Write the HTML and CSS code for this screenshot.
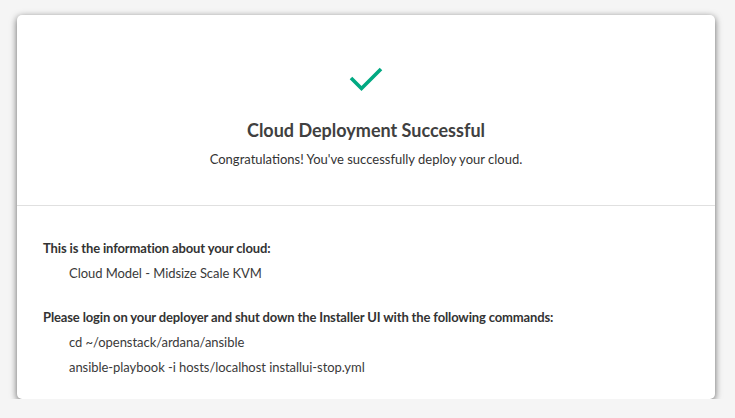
FILE: index.html
```html
<!DOCTYPE html>
<html>
<head>
<meta charset="utf-8">
<link rel="stylesheet" href="styles.css">
</head>
<body>
<div class="card">
  <div class="top">
    <svg class="check" width="36" height="28" viewBox="0 0 36 28">
      <polyline points="3,13 13.5,23.5 33,4" fill="none" stroke="#01a982" stroke-width="3.6"/>
    </svg>
    <h1 class="title">Cloud Deployment Successful</h1>
    <p class="sub">Congratulations! You've successfully deploy your cloud.</p>
  </div>
  <div class="info">
    <div class="label">This is the information about your cloud:</div>
    <div class="item">Cloud Model - Midsize Scale KVM</div>
    <div class="label gap">Please login on your deployer and shut down the Installer UI with the following commands:</div>
    <div class="item">cd ~/openstack/ardana/ansible</div>
    <div class="item">ansible-playbook -i hosts/localhost installui-stop.yml</div>
  </div>
</div>
</body>
</html>
```
FILE: styles.css
```css
html, body { margin: 0; padding: 0; }
body {
  background: #f5f5f5;
  font-family: Lato, "Open Sans", sans-serif;
  color: #333;
  padding: 15px 20px 0 17px;
}
.card {
  width: 698px;
  height: 384px;
  background: #fff;
  border-radius: 5px;
  box-shadow: 0 2px 7px rgba(0,0,0,0.6);
  box-sizing: border-box;
}
.top {
  height: 191px;
  border-bottom: 1px solid #e0e0e0;
  display: flex;
  flex-direction: column;
  align-items: center;
  box-sizing: border-box;
  padding-top: 50px;
}
.check { display: block; }
.title {
  margin: 27px 0 0;
  font-size: 18px;
  font-weight: 700;
  line-height: 20px;
  color: #404040;
}
.sub {
  margin: 11px 0 0;
  font-size: 13px;
  line-height: 16px;
  color: #333;
}
.info {
  padding: 34px 26px 0;
  font-size: 13px;
  line-height: 16px;
}
.label { font-weight: 700; letter-spacing: -0.14px; }
.label.gap { margin-top: 28px; }
.item { padding-left: 26px; margin-top: 9px; letter-spacing: -0.05px; color: #3a3a3a; }
```
